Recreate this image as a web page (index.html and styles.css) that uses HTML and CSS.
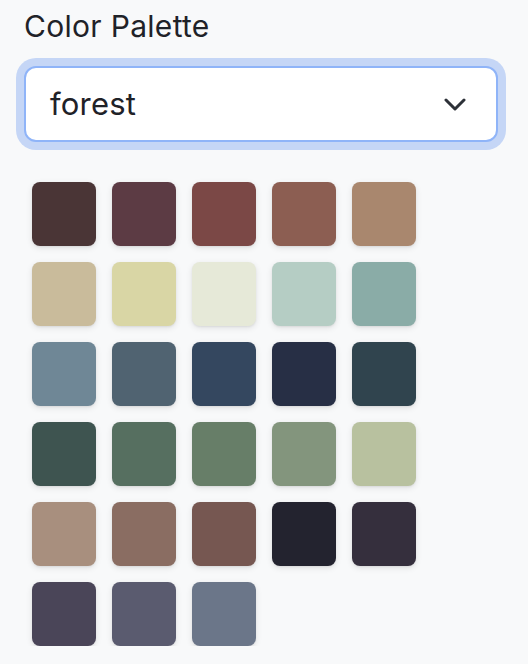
FILE: index.html
```html
<!DOCTYPE html>
<html lang="en">
<head>
<meta charset="utf-8">
<title>Color Palette</title>
<link rel="stylesheet" href="styles.css">
</head>
<body>
<div class="panel">
  <label class="label" for="palette">Color Palette</label>
  <div class="select">
    <span class="select-value" id="palette">forest</span>
    <svg class="chevron" width="22" height="14" viewBox="0 0 22 14" aria-hidden="true">
      <polyline points="2,2 11,11 20,2" fill="none" stroke="#2d3138" stroke-width="3" stroke-linecap="round" stroke-linejoin="round"/>
    </svg>
  </div>
  <div class="swatches">
    <div class="swatch" style="background:#4a3536"></div>
    <div class="swatch" style="background:#5c3b44"></div>
    <div class="swatch" style="background:#7b4846"></div>
    <div class="swatch" style="background:#8c5e52"></div>
    <div class="swatch" style="background:#a9876e"></div>

    <div class="swatch" style="background:#c9bb9b"></div>
    <div class="swatch" style="background:#d9d6a5"></div>
    <div class="swatch" style="background:#e6e9d8"></div>
    <div class="swatch" style="background:#b5cdc4"></div>
    <div class="swatch" style="background:#8aaca7"></div>

    <div class="swatch" style="background:#6f8796"></div>
    <div class="swatch" style="background:#506371"></div>
    <div class="swatch" style="background:#34475f"></div>
    <div class="swatch" style="background:#272f45"></div>
    <div class="swatch" style="background:#30444e"></div>

    <div class="swatch" style="background:#3e5450"></div>
    <div class="swatch" style="background:#566f60"></div>
    <div class="swatch" style="background:#677e68"></div>
    <div class="swatch" style="background:#83957d"></div>
    <div class="swatch" style="background:#b8c19f"></div>

    <div class="swatch" style="background:#a88f7e"></div>
    <div class="swatch" style="background:#8a6d62"></div>
    <div class="swatch" style="background:#765751"></div>
    <div class="swatch" style="background:#23232f"></div>
    <div class="swatch" style="background:#352f3d"></div>

    <div class="swatch" style="background:#4a4558"></div>
    <div class="swatch" style="background:#5a5b6f"></div>
    <div class="swatch" style="background:#6b7689"></div>
  </div>
</div>
</body>
</html>
```

FILE: styles.css
```css
html, body {
  margin: 0;
  padding: 0;
  background: #f8f9fa;
}

body {
  font-family: Inter, "Noto Sans", "Liberation Sans", sans-serif;
  color: #1f2228;
}

.panel {
  padding: 8px 30px 0 24px;
  display: flex;
  flex-direction: column;
}

.label {
  font-size: 30px;
  line-height: 36px;
  letter-spacing: 0.3px;
  margin-bottom: 22px;
}

.select {
  height: 76px;
  box-sizing: border-box;
  border: 2px solid #8fb4f8;
  border-radius: 12px;
  background: #ffffff;
  box-shadow: 0 0 0 8px #c5d6f6;
  display: flex;
  align-items: center;
  justify-content: space-between;
  padding: 0 30px 0 24px;
}

.select-value {
  font-size: 31px;
  line-height: 40px;
  letter-spacing: 0.2px;
}

.chevron {
  display: block;
  margin-top: 2px;
}

.swatches {
  margin-top: 40px;
  padding-left: 8px;
  display: grid;
  grid-template-columns: repeat(5, 64px);
  gap: 16px;
}

.swatch {
  width: 64px;
  height: 64px;
  border-radius: 8px;
  box-shadow: 0 2px 6px rgba(0, 0, 0, 0.10), 0 1px 2px rgba(0, 0, 0, 0.06);
}
```
